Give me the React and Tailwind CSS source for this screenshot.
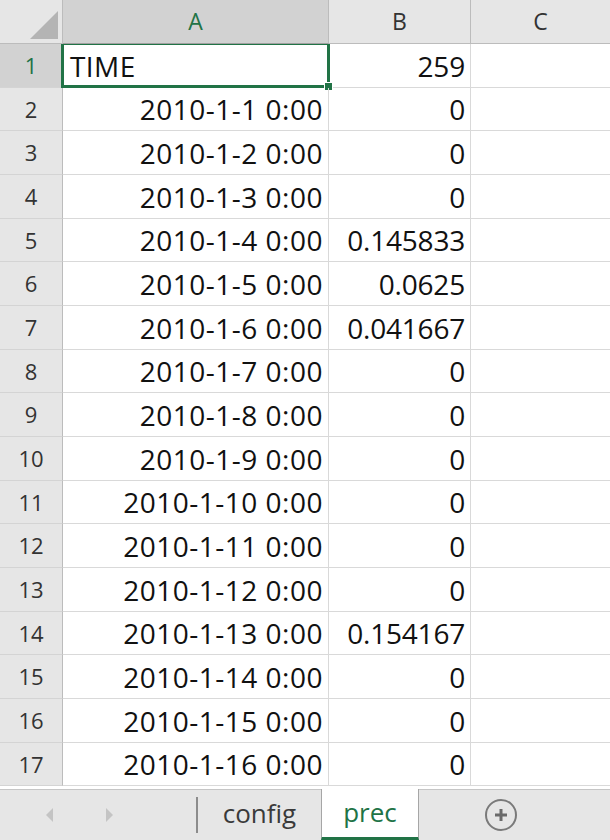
import { useState } from 'react';

const rows = [
  ['TIME', '259'],
  ['2010-1-1 0:00', '0'],
  ['2010-1-2 0:00', '0'],
  ['2010-1-3 0:00', '0'],
  ['2010-1-4 0:00', '0.145833'],
  ['2010-1-5 0:00', '0.0625'],
  ['2010-1-6 0:00', '0.041667'],
  ['2010-1-7 0:00', '0'],
  ['2010-1-8 0:00', '0'],
  ['2010-1-9 0:00', '0'],
  ['2010-1-10 0:00', '0'],
  ['2010-1-11 0:00', '0'],
  ['2010-1-12 0:00', '0'],
  ['2010-1-13 0:00', '0.154167'],
  ['2010-1-14 0:00', '0'],
  ['2010-1-15 0:00', '0'],
  ['2010-1-16 0:00', '0'],
];

export default function App() {
  const [active, setActive] = useState('prec');

  return (
    <div className="w-[610px] h-[840px] overflow-hidden bg-white flex flex-col font-['Open_Sans',sans-serif] text-[#111]">
      {/* Column headers */}
      <div className="flex h-[44px] shrink-0">
        <div className="w-[63px] bg-[#e6e6e6] border-r border-b border-[#bcbcbc] flex items-end justify-end p-[4px]">
          <div className="w-0 h-0 border-l-[28px] border-l-transparent border-b-[28px] border-b-[#b4b4b4]" />
        </div>
        <div className="w-[266px] bg-[#d2d2d2] border-r border-b border-[#bcbcbc] border-b-[#a0a0a0] flex items-center justify-center text-[23px] text-[#217346]">A</div>
        <div className="w-[142px] bg-[#e6e6e6] border-r border-b border-[#bcbcbc] flex items-center justify-center text-[23px] text-[#333]">B</div>
        <div className="flex-1 bg-[#e6e6e6] border-b border-[#bcbcbc] flex items-center justify-center text-[23px] text-[#333]">C</div>
      </div>

      {/* Rows */}
      <div className="flex-1 flex flex-col overflow-hidden">
        {rows.map(([a, b], i) => (
          <div key={i} className={`flex shrink-0 ${i % 3 === 1 ? 'h-[43px]' : 'h-[44px]'}`}>
            <div
              className={`w-[63px] border-r border-b border-[#bcbcbc] border-b-[#d4d4d4] flex items-center justify-center text-[22px] ${
                i === 0 ? 'bg-[#d2d2d2] text-[#217346]' : 'bg-[#e6e6e6] text-[#333]'
              }`}
            >
              {i + 1}
            </div>
            <div className={`w-[266px] border-r border-b border-[#d9d9d9] flex items-center text-[28px] relative ${i === 0 ? 'justify-start pl-[7px] tracking-[0.4px]' : 'justify-end pr-[5px] tracking-[0.5px]'}`}>
              {a}
              {i === 0 && (
                <div className="absolute -left-[2px] -top-[2px] -right-[2px] -bottom-[1px] border-[3px] border-[#217346] pointer-events-none">
                  <div className="absolute -right-[6px] -bottom-[6px] w-[9px] h-[9px] bg-[#217346] border border-white" />
                </div>
              )}
            </div>
            <div className="w-[142px] border-r border-b border-[#d9d9d9] flex items-center justify-end pr-[5px] text-[28px] tracking-[-0.2px]">{b}</div>
            <div className="flex-1 border-b border-[#d9d9d9]" />
          </div>
        ))}
      </div>

      {/* Sheet tabs */}
      <div className="h-[51px] shrink-0 bg-[#e6e6e6] border-t border-[#c6c6c6] flex items-stretch">
        <div className="w-[196px] flex items-center">
          <div className="ml-[46px] w-0 h-0 border-y-[7px] border-y-transparent border-r-[7px] border-r-[#c4c4c4]" />
          <div className="ml-[53px] w-0 h-0 border-y-[7px] border-y-transparent border-l-[7px] border-l-[#c4c4c4]" />
        </div>
        <div className="w-[2px] bg-[#8c8c8c] my-[7px]" />
        <button className="w-[123px] flex items-center justify-center text-[26px] text-[#3a3a3a] pb-[4px]" onClick={() => setActive('config')}>
          config
        </button>
        <button
          className="w-[98px] -mt-px bg-white border-x border-[#a6a6a6] border-b-[3px] border-b-[#217346] flex items-center justify-center text-[26px] text-[#217346] pb-[2px]"
          onClick={() => setActive('prec')}
        >
          prec
        </button>
        <div className="flex-1 flex items-center">
          <div className="ml-[66px] w-[32px] h-[32px] rounded-full border-2 border-[#7a7a7a] flex items-center justify-center">
            <svg width="16" height="16" viewBox="0 0 16 16">
              <path d="M8 2v12M2 8h12" stroke="#6a6a6a" strokeWidth="3" />
            </svg>
          </div>
        </div>
      </div>
    </div>
  );
}
